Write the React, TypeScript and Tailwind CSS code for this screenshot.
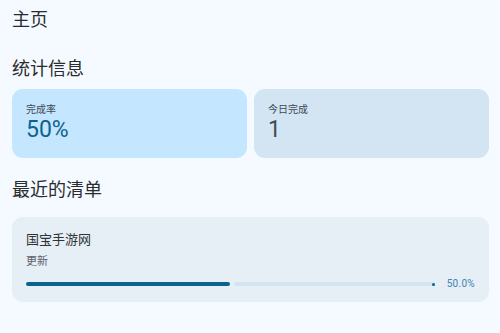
import React from "react";

export default function App() {
  const pct = 50;
  return (
    <div
      className="w-[500px] h-[333px] bg-[#f4faff] text-[#1b1c1e] overflow-hidden pl-[12px] pr-[11px]"
      style={{ fontFamily: '"Roboto", "Noto Sans CJK SC", sans-serif' }}
    >
      <div className="pt-[8px] h-[52px] text-[18px] leading-[24px] text-[#2a2c2e]">主页</div>
      <div className="h-[37px] pt-[5px] text-[18px] leading-[24px] text-[#2a2c2e]">统计信息</div>
      <div className="flex gap-[7px]">
        <div className="flex-1 h-[69px] rounded-[11px] bg-[#c4e6fe] px-[14px] pt-[14px]">
          <div className="text-[10px] leading-[13px] text-[#3e4a52]">完成率</div>
          <div className="text-[23px] leading-[28px] text-[#0e628e]">50%</div>
        </div>
        <div className="flex-1 h-[69px] rounded-[11px] bg-[#d3e4f3] px-[14px] pt-[14px]">
          <div className="text-[10px] leading-[13px] text-[#3e4a52]">今日完成</div>
          <div className="text-[23px] leading-[28px] text-[#3f4b55]">1</div>
        </div>
      </div>
      <div className="pt-[20px] h-[59px] text-[18px] leading-[24px] text-[#2a2c2e]">最近的清单</div>
      <div className="h-[85px] rounded-[11px] bg-[#e6eef6] px-[14px] pt-[14px]">
        <div className="text-[13px] leading-[18px] text-[#2e3236]">国宝手游网</div>
        <div className="mt-[5px] text-[11px] leading-[15px] text-[#5b636a]">更新</div>
        <div className="mt-[9px] flex items-center">
          <div className="relative flex-1 h-[4px] flex items-center">
            <div className="h-[4px] rounded-full bg-[#0b628f]" style={{ width: `${pct}%` }} />
            <div className="ml-[4px] flex-1 h-[4px] rounded-l-full bg-[#d2e4f2]" />
            <div className="absolute right-0 w-[3px] h-[3px] rounded-full bg-[#0b628f]" />
          </div>
          <div className="ml-[12px] text-[10px] leading-[12px] text-[#3c86ad] tracking-[0.3px]">50.0%</div>
        </div>
      </div>
    </div>
  );
}
